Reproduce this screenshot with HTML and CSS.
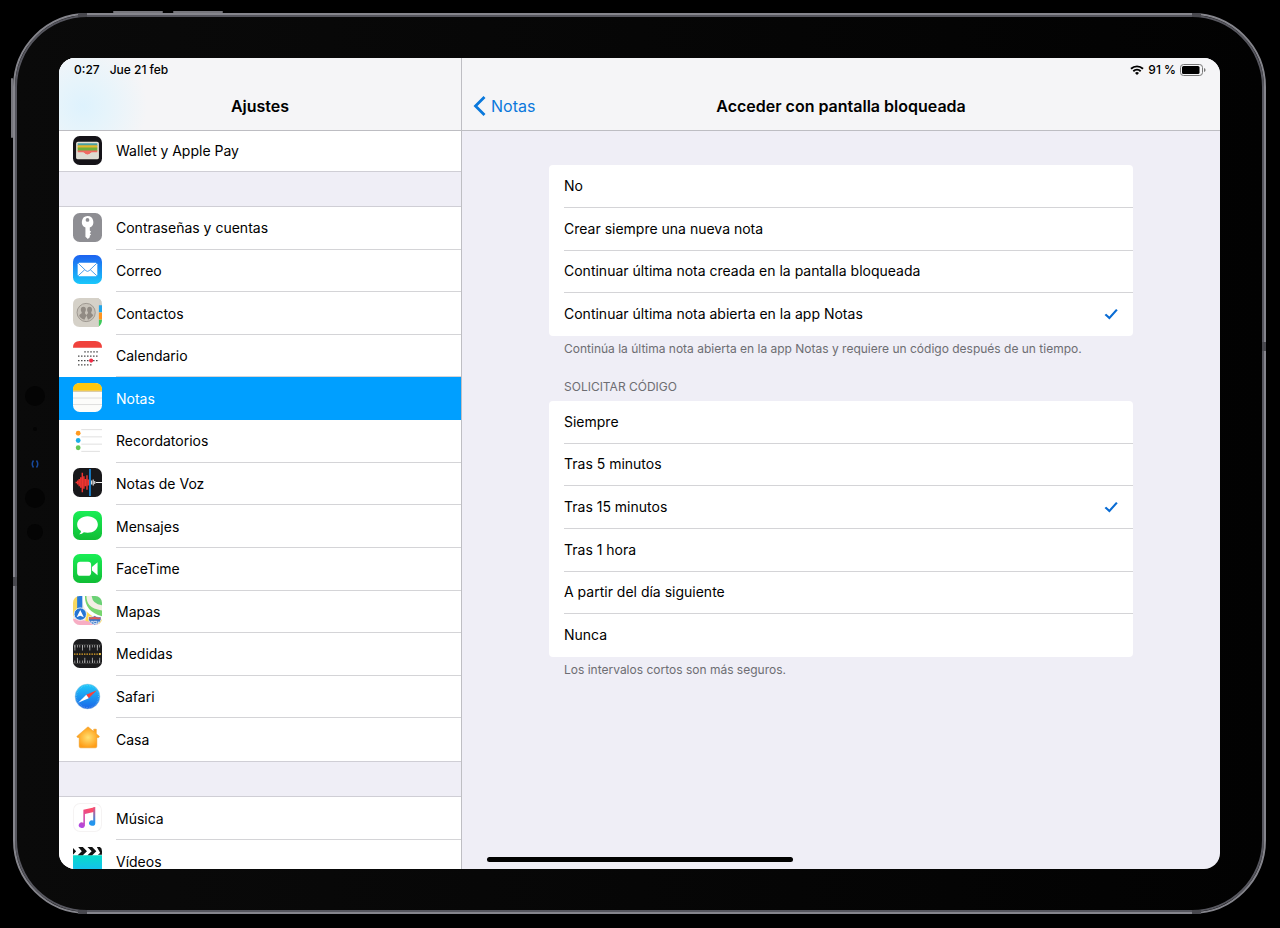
FILE: index.html
```html
<!DOCTYPE html>
<html lang="es">
<head>
<meta charset="utf-8">
<meta name="viewport" content="width=device-width, initial-scale=1">
<title>Ajustes</title>
<link rel="stylesheet" href="styles.css">
</head>
<body>
<div class="device">
  <span class="key key-top key-up"></span>
  <span class="key key-top key-down"></span>
  <span class="key key-power"></span>
  <span class="seam seam-h seam-tl"></span>
  <span class="seam seam-h seam-tr"></span>
  <span class="seam seam-h seam-bl"></span>
  <span class="seam seam-h seam-br"></span>
  <span class="seam seam-v seam-l"></span>
  <span class="seam seam-v seam-r"></span>
  <svg class="sensors" width="24" height="160" viewBox="0 0 24 160" aria-hidden="true">
    <g fill="#040404"><circle cx="12" cy="12" r="10"/><circle cx="12" cy="45" r="2"/><circle cx="12" cy="114" r="10"/><circle cx="12" cy="148" r="8"/></g>
    <path d="M10.500 76.500q-2.500 3.500 0 7M13.500 76.500q2.500 3.500 0 7" fill="none" stroke="#16489c" stroke-width="1.500"/>
  </svg>

  <div class="screen">
    <aside class="sidebar">
      <header class="header header-side">
        <div class="status"><time>0:27</time><span>Jue 21 feb</span></div>
        <div class="bar"><h1 class="title">Ajustes</h1></div>
      </header>
      <nav class="menu" aria-label="Ajustes">
        <div class="group group-first">
          <a class="item" href="#wallet">
            <svg class="icon" viewBox="0 0 28 28" aria-hidden="true"><rect width="28" height="28" rx="6.500" fill="#151318"/><rect x="3" y="5.500" width="22" height="17" rx="1.800" fill="#e5e1d5"/><path d="M4.500 7h19v3h-19z" fill="#4b9fa0"/><path d="M4.500 9h19v3h-19z" fill="#e5b52c"/><path d="M4.500 11h19v3.500h-19z" fill="#6fae3c"/><path d="M4.500 14h19v2h-5c-2 0-2 2-4.500 2s-2.500-2-4.500-2h-5z" fill="#ef6a62"/><path d="M3.500 16h5.500c2 0 2.500 2 5 2s3-2 5-2h5.500v4.500q0 1.500-1.500 1.500H5q-1.500 0-1.500-1.500z" fill="#dddcd2"/></svg>
            <span class="label">Wallet y Apple Pay</span></a>
        </div>
        <div class="gap"></div>
        <div class="group group-main">
          <a class="item" href="#cuentas">
            <svg class="icon" viewBox="0 0 28 28" aria-hidden="true"><rect width="28" height="28" rx="6.500" fill="#8e8e93"/><path fill="#fff" fill-rule="evenodd" d="M14 3a5.800 5.800 0 0 1 2.200 11.100V17l1.300 1.200-1.300 1.300 1.300 1.300-1.300 1.200v1.500L14.300 25 12 23v-8.900A5.800 5.800 0 0 1 14 3zm0 1.900a1.800 1.800 0 1 0 0 3.600 1.800 1.800 0 0 0 0-3.600z"/></svg>
            <span class="label">Contraseñas y cuentas</span></a>
          <a class="item" href="#correo">
            <svg class="icon" viewBox="0 0 28 28" aria-hidden="true"><defs><linearGradient id="mail" x2="0" y2="1"><stop stop-color="#1d62f0"/><stop offset="1" stop-color="#19c8fb"/></linearGradient></defs><rect width="28" height="28" rx="6.500" fill="url(#mail)"/><rect x="4.500" y="7.500" width="19" height="13" rx="1.500" fill="#fff"/><path d="M5 8l7.500 7.200q1.500 1.300 3 0L23 8M5 20l6.500-6M23 20l-6.500-6" fill="none" stroke="#4098e8" stroke-width=".9"/></svg>
            <span class="label">Correo</span></a>
          <a class="item" href="#contactos">
            <svg class="icon" viewBox="0 0 28 28" aria-hidden="true"><path d="M22 0q6 0 6 6v3h-5z" fill="#d0cec8"/><path d="M24 7h4v7h-4z" fill="#23a5e8"/><path d="M24 14h4v7h-4z" fill="#ff9420"/><path d="M24 21h4q0 5-4 7z" fill="#3fc95a"/><path d="M6.500 0H25v28H6.500Q0 28 0 21.500v-15Q0 0 6.500 0z" fill="#d5d1c8"/><circle cx="12.700" cy="14" r="8.800" fill="#c8c3ba" stroke="#958f87" stroke-width=".8"/><path d="M10 8.500c2.800 0 3 3.500 1.500 5.500 0 2 1.500 1.500 1.500 3l-2 4q-4-1-5-4c0-1.500 2.500-1.500 2.500-3C7 12 7.200 8.500 10 8.500zM16 8.500c2.600 0 3 3.500 1.500 5.500 0 1.500 2 1.500 2 3q-2 3-5 4l-1.500-4c0-1.500 1.500-1.500 1.500-3-1.500-2-1-5.500 1.500-5.500z" fill="#918b84"/></svg>
            <span class="label">Contactos</span></a>
          <a class="item" href="#calendario">
            <svg class="icon" viewBox="0 0 28 28" aria-hidden="true"><rect width="28" height="28" rx="6.500" fill="#fff"/><path d="M0 6.500Q0 0 6.500 0h15Q28 0 28 6.500z" fill="#f0423c"/><g fill="none" stroke="#222" stroke-width="1.200" stroke-dasharray="1.200 1.700"><path d="M11 10.500h13M5 14.700h19M5 18.900h19M5 23.100h13"/></g><circle cx="17.500" cy="18.900" r="2" fill="#f22a45"/></svg>
            <span class="label">Calendario</span></a>
          <a class="item selected" href="#notas" aria-current="page">
            <svg class="icon" viewBox="0 0 28 28" aria-hidden="true"><rect width="28" height="28" rx="6.500" fill="#fcfcfa"/><path d="M0 7.500v-1Q0 0 6.500 0h15Q28 0 28 6.500v1z" fill="#fdc70c"/><path d="M0 8h28" stroke="#c9b27a" stroke-width=".8"/><path d="M0 14.500h28M0 20.800h28" stroke="#d8d8d8" stroke-width=".8"/></svg>
            <span class="label">Notas</span></a>
          <a class="item" href="#recordatorios">
            <svg class="icon" viewBox="0 0 28 28" aria-hidden="true"><rect width="28" height="28" rx="6.500" fill="#fff"/><path d="M8 3.500h20M8 10.500h20M8 17.500h20M8 24.500h18" stroke="#dedede" stroke-width=".9"/><circle cx="5" cy="7" r="2.300" fill="#ff9a20"/><circle cx="5" cy="14" r="2.300" fill="#1aaee8"/><circle cx="5" cy="21" r="2.300" fill="#63c655"/></svg>
            <span class="label">Recordatorios</span></a>
          <a class="item" href="#voz">
            <svg class="icon" viewBox="0 0 28 28" aria-hidden="true"><rect width="28" height="28" rx="6.500" fill="#18181b"/><path d="M2.500 14h2M4.500 12v4M6 10.500v7M7.500 9v10M9 4.500v19M10.500 8v12M12 10.500v7M13.500 7v14M15 11v6" stroke="#ee3430" stroke-width="1.400"/><path d="M16.400 1v26" stroke="#1795ef" stroke-width="1.500"/><path d="M18 12v4M19.500 11v6M21 12.500v3M22 14h6" stroke="#f4f4f4"/></svg>
            <span class="label">Notas de Voz</span></a>
          <a class="item" href="#mensajes">
            <svg class="icon" viewBox="0 0 28 28" aria-hidden="true"><defs><linearGradient id="green" x2="0" y2="1"><stop stop-color="#19ee55"/><stop offset="1" stop-color="#10bd35"/></linearGradient></defs><rect width="28" height="28" rx="6.500" fill="url(#green)"/><path d="M14 5c5.800 0 10 3.500 10 8s-4.200 8-10 8q-2 0-3.500-.4Q8.700 22.500 6 22.400q1.800-1.400 1.700-3.200Q4 17 4 13c0-4.500 4.200-8 10-8z" fill="#fff"/></svg>
            <span class="label">Mensajes</span></a>
          <a class="item" href="#facetime">
            <svg class="icon" viewBox="0 0 28 28" aria-hidden="true"><rect width="28" height="28" rx="6.500" fill="url(#green)"/><rect x="4" y="7.500" width="13.500" height="13.500" rx="3" fill="#fff"/><path d="M18.300 12.500l5.400-4.500v12.500l-5.400-4.500z" fill="#fff"/></svg>
            <span class="label">FaceTime</span></a>
          <a class="item" href="#mapas">
            <svg class="icon" viewBox="0 0 28 28" aria-hidden="true"><defs><clipPath id="tile"><rect width="28" height="28" rx="6.500"/></clipPath></defs><g clip-path="url(#tile)"><path fill="#f3eee4" d="M0 0h28v28H0z"/><path d="M0 0h5v19H0z" fill="#f8d860"/><path d="M13 0c0 7 3 12 15 14v7C15 18 10 10 11 0z" fill="#77d66f"/><path d="M18 0q1 8 10 9V0z" fill="#6bd176"/><path d="M0 22l28 4v2H0z" fill="#f7adc4"/><path d="M10 0c0 11 5 18 18 21" fill="none" stroke="#fff" stroke-width="3"/><path d="M13 15q7 7 15 8v5l-16-4z" fill="#ffda50"/><path d="M6.500 0v16" stroke="#277bd9" stroke-width="5"/><circle cx="7" cy="17.500" r="6" fill="#2575d4" stroke="#fff" stroke-width=".8"/><path d="M7 13.500l3.500 7L7 19l-3.500 1.500z" fill="#fff"/><path d="M15 20q3 1 6-1 3 2 6 1 1 6-6 8-7-2-6-8z" fill="#3977c9" stroke="#fff" stroke-width=".6"/><path d="M15.500 20.500q3 .8 5.500-.7 2.500 1.500 5.500.7v2h-11z" fill="#dc5b55"/><path d="M17 24.500h2l-1.500 2M20 24.500h3v2h-3zM24.500 24.500v2" fill="none" stroke="#fff" stroke-width=".7"/></g></svg>
            <span class="label">Mapas</span></a>
          <a class="item" href="#medidas">
            <svg class="icon" viewBox="0 0 28 28" aria-hidden="true"><rect width="28" height="28" rx="6.500" fill="#1b1b1d"/><path d="M0 5.500h28M0 23.500h28" stroke="#555" stroke-width=".5"/><g fill="none" stroke="#c8c8c8"><path d="M1.500 7h26" stroke-width="2.500" stroke-dasharray=".6 1.800"/><path d="M1.500 8.500h26" stroke-width="5" stroke-dasharray=".7 6.500"/><path d="M1.500 22h26" stroke-width="2.500" stroke-dasharray=".6 1.800"/><path d="M3.900 20.500h23" stroke-width="5" stroke-dasharray=".7 6.500"/></g><path d="M1 14.500h26" stroke="#e8a928" stroke-width="1.200" stroke-dasharray="1.400 1"/><circle cx="26" cy="14.500" r="1.100" fill="#f5ca4e"/></svg>
            <span class="label">Medidas</span></a>
          <a class="item" href="#safari">
            <svg class="icon" viewBox="0 0 28 28" aria-hidden="true"><defs><linearGradient id="saf" x2="0" y2="1"><stop stop-color="#1ecbfa"/><stop offset="1" stop-color="#1a65e8"/></linearGradient></defs><rect width="28" height="28" rx="6.500" fill="#fff"/><circle cx="14" cy="14" r="12" fill="url(#saf)" stroke="#a9c9df" stroke-width=".5"/><circle cx="14" cy="14" r="10.600" fill="none" stroke="#fff" stroke-opacity=".4" stroke-dasharray=".4 1.200"/><path d="M23 8l-7.800 7.800-2.400-3.600z" fill="#fb4038"/><path d="M5 20l7.800-7.800 2.400 3.600z" fill="#fff"/></svg>
            <span class="label">Safari</span></a>
          <a class="item" href="#casa">
            <svg class="icon" viewBox="0 0 28 28" aria-hidden="true"><defs><radialGradient id="home"><stop stop-color="#ffe173"/><stop offset="1" stop-color="#ff9d16"/></radialGradient></defs><rect width="28" height="28" rx="6.500" fill="#fff"/><path d="M14.500 3q.5 0 1 .5l4.500 3.800V5h2.500v4.500l2.500 2q1 1-.2 1.500H23v8.500q0 1.500-1.500 1.500h-14Q6 23 6 21.500V13H4.700q-1.700-.5-.5-1.500l9.300-8q.5-.5 1-.5z" fill="url(#home)" stroke="#ec9617" stroke-width=".5"/></svg>
            <span class="label">Casa</span></a>
        </div>
        <div class="gap"></div>
        <div class="group group-last">
          <a class="item" href="#musica">
            <svg class="icon" viewBox="0 0 28 28" aria-hidden="true"><defs><linearGradient id="mus" x1="0" y1="1" x2=".5" y2="0"><stop stop-color="#a746ee"/><stop offset="1" stop-color="#ff4c68"/></linearGradient><linearGradient id="mus2" x2="0" y2="1"><stop stop-color="#f84b75"/><stop offset=".8" stop-color="#2395ee"/></linearGradient></defs><rect x=".5" y=".5" width="27" height="27" rx="6.500" fill="#fff" stroke="#f5f3f3"/><path d="M10 20.500V6.500L21 4v4.500l-9.500 2.200v11.300a3 2.700 0 1 1-1.500-3z" fill="url(#mus)"/><path d="M19.500 4.400l2-.5v15.600a3 2.700 0 1 1-2-2.700z" fill="url(#mus2)"/></svg>
            <span class="label">Música</span></a>
          <a class="item" href="#videos">
            <svg class="icon" viewBox="0 0 28 28" aria-hidden="true"><defs><linearGradient id="vid" x2="0" y2="1"><stop stop-color="#08dbca"/><stop offset="1" stop-color="#19b7fb"/></linearGradient></defs><path d="M0 9h28v12.500q0 6.500-6.500 6.500h-15Q0 28 0 21.500z" fill="url(#vid)"/><path d="M0 2l3 3-3 3.500zM5 1h4.500l4 4-4 4H4.500l4-4zM14 1h4.500l4 4-4 4H14l4-4zM23 1h3q2 1 2 4v2.500L27 8zM24 8.500l3.500-3 .5 3z" fill="#111"/></svg>
            <span class="label">Vídeos</span></a>
        </div>
      </nav>
    </aside>

    <main class="detail">
      <header class="header">
        <div class="status status-end">
          <svg width="14" height="10" viewBox="0 0 14 10" aria-hidden="true"><g fill="none" stroke="#000" stroke-width="1.900"><path d="M1 3.800a8.600 8.600 0 0 1 12 0M3.300 6.200a5.300 5.300 0 0 1 7.400 0"/></g><path d="M5 8a3 3 0 0 1 4 0L7 10z"/></svg>
          <span>91 %</span>
          <svg width="26" height="12" viewBox="0 0 26 12" aria-hidden="true"><rect x=".5" y=".5" width="22" height="11" rx="3" fill="none" stroke="#777"/><rect x="2" y="2" width="17.500" height="8" rx="1.500"/><path d="M24 4q1.600.6 1.600 2T24 8z" fill="#777"/></svg>
        </div>
        <div class="bar">
          <button class="back" type="button"><svg width="13" height="20" viewBox="0 0 13 20" aria-hidden="true"><path d="M11.500 1L2.500 10l9 9" fill="none" stroke="#0a78dc" stroke-width="2.800"/></svg>Notas</button>
          <h2 class="title">Acceder con pantalla bloqueada</h2>
        </div>
      </header>
      <form class="content">
        <div class="options" role="radiogroup" aria-label="Acceder con pantalla bloqueada">
          <label class="option"><span>No</span><input type="radio" name="acceso"></label>
          <label class="option"><span>Crear siempre una nueva nota</span><input type="radio" name="acceso"></label>
          <label class="option"><span>Continuar última nota creada en la pantalla bloqueada</span><input type="radio" name="acceso"></label>
          <label class="option"><span>Continuar última nota abierta en la app Notas</span><input type="radio" name="acceso" checked></label>
        </div>
        <p class="note">Continúa la última nota abierta en la app Notas y requiere un código después de un tiempo.</p>
        <h3 class="caption" id="codigo">SOLICITAR CÓDIGO</h3>
        <div class="options options-code" role="radiogroup" aria-labelledby="codigo">
          <label class="option"><span>Siempre</span><input type="radio" name="codigo"></label>
          <label class="option"><span>Tras 5 minutos</span><input type="radio" name="codigo"></label>
          <label class="option"><span>Tras 15 minutos</span><input type="radio" name="codigo" checked></label>
          <label class="option"><span>Tras 1 hora</span><input type="radio" name="codigo"></label>
          <label class="option"><span>A partir del día siguiente</span><input type="radio" name="codigo"></label>
          <label class="option"><span>Nunca</span><input type="radio" name="codigo"></label>
        </div>
        <p class="note">Los intervalos cortos son más seguros.</p>
      </form>
    </main>
    <div class="home-bar"></div>
  </div>
</div>
</body>
</html>
```
FILE: styles.css
```css
* { box-sizing: border-box; }

body {
  margin: 0;
  height: 100vh;
  padding: 13px 14px 14px 13px;
  display: flex;
  background: #000;
  color: #000;
  font-family: Inter, "Liberation Sans", sans-serif;
  font-size: 14px;
  line-height: 20px;
}

.device {
  position: relative;
  flex: 1;
  min-width: 0;
  display: flex;
  padding: 43px 44px;
  border: 2px solid #85858c;
  border-radius: 74px;
  background: linear-gradient(90deg, #0a0a0a, #020202);
  box-shadow: inset 0 0 0 2px #56565e;
}

/* hardware keys and antenna seams on the metal edge */
.key, .seam, .sensors { position: absolute; }
.key { background: #77777d; border-radius: 1px; }
.key-top { top: -4px; width: 50px; height: 2px; }
.key-up { left: 98px; }
.key-down { left: 158px; }
.key-power { left: -4px; top: 63px; width: 2px; height: 60px; }
.seam { background: #48484e; }
.seam-h { width: 9px; height: 4px; }
.seam-v { width: 4px; height: 9px; }
.seam-tl { left: 63px; top: -2px; }
.seam-tr { right: 63px; top: -2px; }
.seam-bl { left: 63px; bottom: -2px; }
.seam-br { right: 63px; bottom: -2px; }
.seam-l { left: -2px; top: 562px; }
.seam-r { right: -2px; top: 327px; }
.sensors { left: 8px; top: 50%; margin-top: -80px; }

.screen {
  position: relative;
  flex: 1;
  min-width: 0;
  display: grid;
  grid-template-columns: 403px 1fr;
  grid-template-rows: minmax(0, 1fr);
  overflow: hidden;
  border-radius: 16px;
  background: #efeef6;
}

.sidebar {
  display: flex;
  flex-direction: column;
  border-right: 1px solid #bebec3;
  background: #fff;
}

.header {
  flex: none;
  border-bottom: 1px solid #bdbdc2;
  background: #f5f5f7;
}
.header-side { background: radial-gradient(circle at 24px 48px, #def2fd 0, #e6f4fb 24px, #f5f5f7 64px); }

.status {
  display: flex;
  align-items: center;
  gap: 10px;
  height: 24px;
  padding: 0 15px;
  font-size: 12px;
  font-weight: 500;
}
.status-end { justify-content: flex-end; gap: 4px; padding-right: 14px; }

.bar {
  position: relative;
  display: flex;
  align-items: center;
  justify-content: center;
  height: 48px;
}
.title { margin: 0; font-size: 16px; font-weight: 600; }

.back {
  position: absolute;
  left: 11px;
  display: flex;
  align-items: center;
  gap: 5px;
  padding: 0;
  border: 0;
  background: none;
  color: #0a78dc;
  font: inherit;
  font-size: 16px;
}

.menu {
  flex: 1;
  min-height: 0;
  display: flex;
  flex-direction: column;
  overflow: hidden;
}
.group { display: grid; grid-auto-rows: 1fr; }
.group-first { flex: none; height: 40px; }
.group-main { flex: 1; }
.group-last { flex: none; height: 72px; grid-auto-rows: 43px; }
.gap {
  flex: none;
  height: 36px;
  border: solid #cfced5;
  border-width: 1px 0;
  background: #efeef6;
}

.item {
  display: flex;
  align-items: center;
  gap: 14px;
  min-height: 40px;
  padding-left: 14px;
  color: #000;
  text-decoration: none;
}
.icon { flex: none; width: 29px; height: 29px; margin-bottom: 2px; }
.label {
  flex: 1;
  align-self: stretch;
  display: flex;
  align-items: center;
  padding-top: 1px;
  border-bottom: 1px solid #d4d4d7;
}
.item:last-child .label { border-bottom-color: transparent; }
.selected { background: #009fff; color: #fff; }
.selected .label { border-bottom-color: transparent; }

.detail { min-width: 0; }
.content { padding: 34px 87px; }

.options {
  display: grid;
  grid-auto-rows: 1fr;
  min-height: 171px;
  padding-left: 15px;
  border-radius: 4px;
  background: #fff;
}
.options-code { min-height: 256px; }
.option {
  display: flex;
  align-items: center;
  justify-content: space-between;
  padding-right: 15px;
  border-bottom: 1px solid #d4d4d7;
}
.option:last-child { border-bottom-color: transparent; }

.option input {
  appearance: none;
  width: 14px;
  height: 12px;
  margin: 0;
}
.option input:checked {
  background: #0a6cd4;
  clip-path: polygon(4% 58%, 16% 46%, 38% 70%, 86% 8%, 98% 18%, 39% 94%);
}

.note, .caption {
  margin: 0;
  padding: 0 15px;
  color: #6d6d72;
  font-size: 12px;
  font-weight: 400;
  line-height: 16px;
}
.note { padding-top: 5px; }
.caption { padding-top: 22px; padding-bottom: 6px; }

.home-bar {
  position: absolute;
  left: 50%;
  bottom: 7px;
  width: 306px;
  height: 5px;
  margin-left: -153px;
  border-radius: 3px;
  background: #000;
}
```
